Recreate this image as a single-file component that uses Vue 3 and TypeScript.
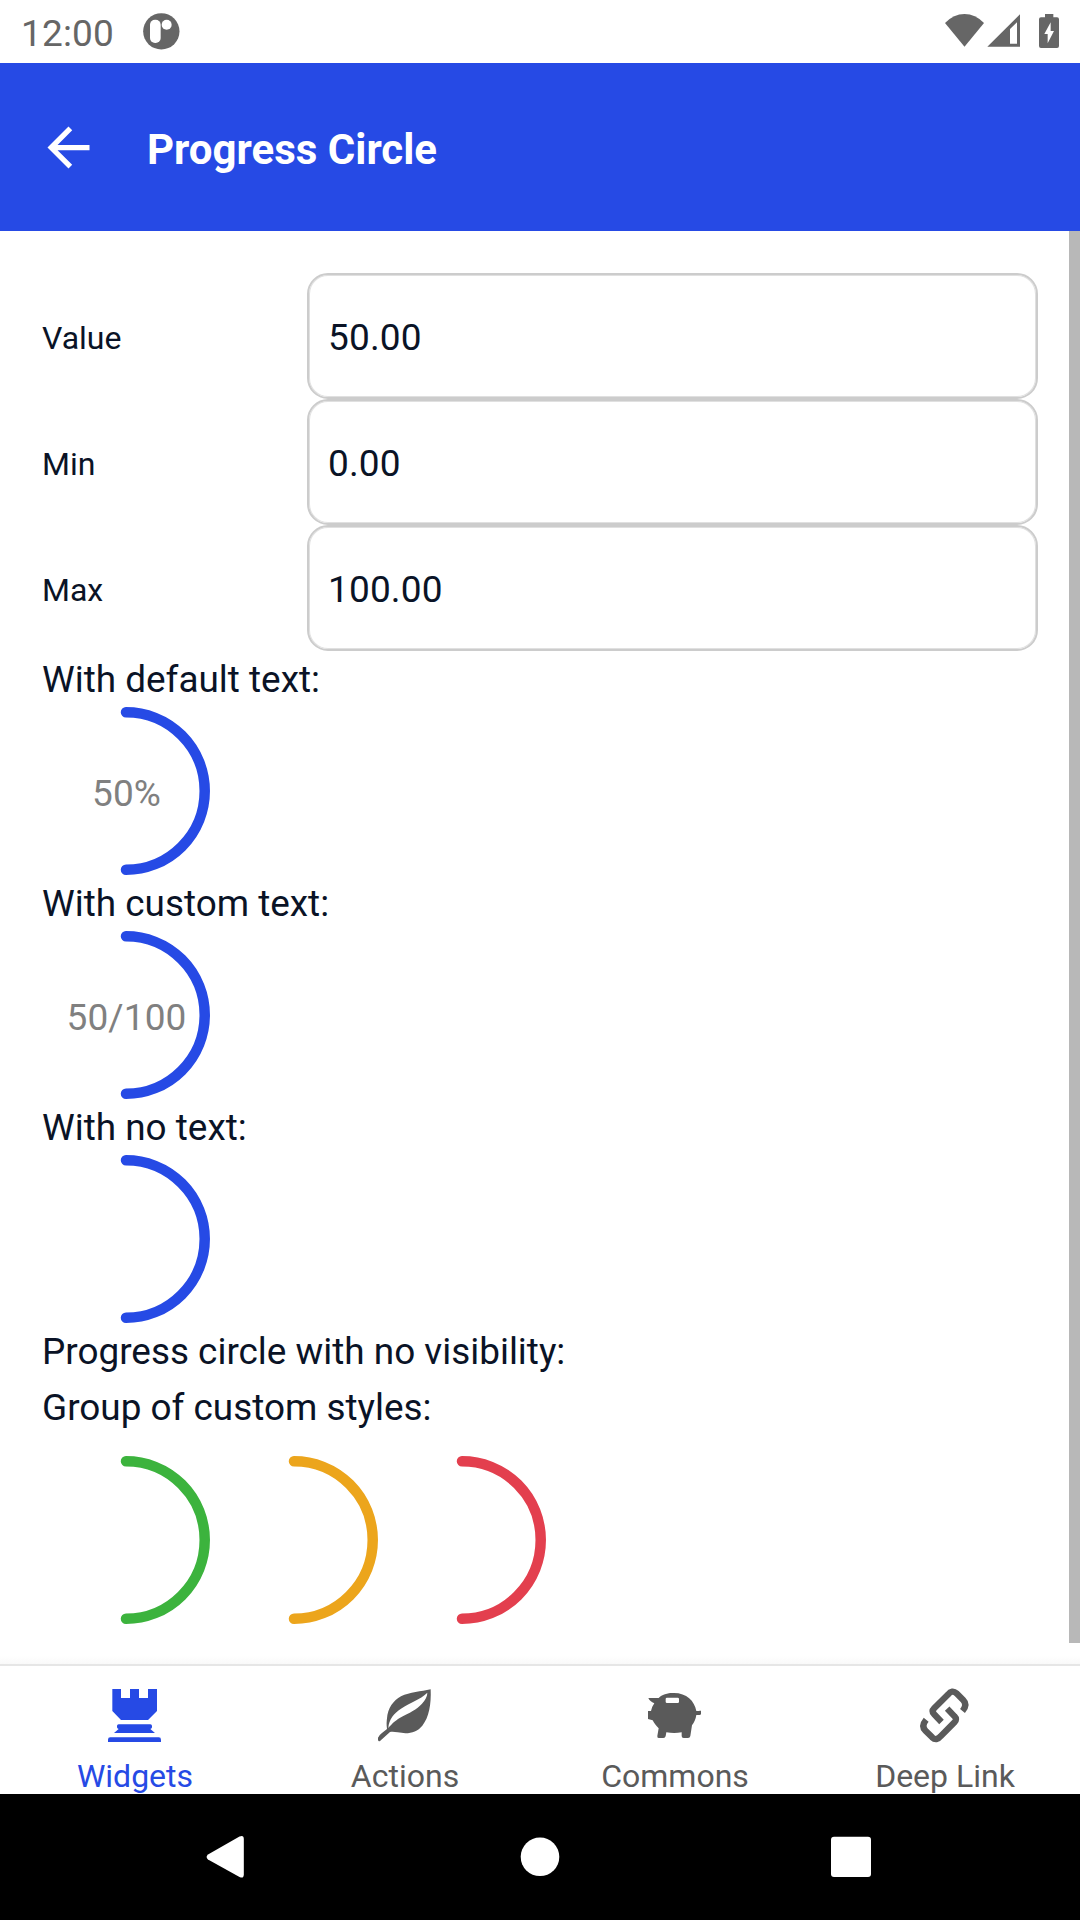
<script setup lang="ts">
import { computed, ref } from 'vue'

interface Field {
  label: string
  value: string
}

const fields = ref<Field[]>([
  { label: 'Value', value: '50.00' },
  { label: 'Min', value: '0.00' },
  { label: 'Max', value: '100.00' },
])

const numbers = computed(() => fields.value.map((f) => Number(f.value) || 0))

const fraction = computed(() => {
  const [value, min, max] = numbers.value
  return max > min ? Math.min(1, Math.max(0, (value - min) / (max - min))) : 0
})

const samples = computed(() => [
  { title: 'With default text:', text: `${Math.round(fraction.value * 100)}%` },
  { title: 'With custom text:', text: `${numbers.value[0]}/${numbers.value[2]}` },
  { title: 'With no text:', text: '' },
])

const brand = '#264ae5'
const styleColors = ['#3cb33d', '#eca51c', '#e33f4e']

const arc = computed(() => {
  const r = 78.75
  const a = Math.min(fraction.value, 0.9999) * 2 * Math.PI
  const x = 84 + r * Math.sin(a)
  const y = 84 - r * Math.cos(a)
  return `M84 5.25A${r} ${r} 0 ${fraction.value > 0.5 ? 1 : 0} 1 ${x} ${y}`
})

const tabs = ['Widgets', 'Actions', 'Commons', 'Deep Link']
const activeTab = ref('Widgets')
</script>

<template>
  <div class="screen">
    <div class="status">
      <span class="clock">12:00</span>
      <svg class="notice" viewBox="0 0 110 110">
        <circle cx="55" cy="55" r="54.5" fill="#666" />
        <rect x="21" y="20" width="32" height="70" rx="15" fill="#fff" />
        <circle cx="71" cy="35" r="15" fill="#fff" />
      </svg>
      <svg class="signals" viewBox="135 0 342 189" fill="#666">
        <path d="M193.500 140L135 69Q161 42 193.500 42T252 69Z" />
        <path fill-rule="evenodd" d="M262 140.500L360 43V140.500ZM330 131H351V67L330 87Z" />
        <path
          fill-rule="evenodd"
          d="M435 42H460V52H471Q477 52 477 58V138Q477 144 471 144H423Q417 144 417 138V58Q417 52 423 52H435ZM452 67L433 102H443V130L462 93H452Z"
        />
      </svg>
    </div>

    <header class="header">
      <svg class="back" viewBox="0 0 24 24" fill="#fff">
        <path d="M20 11H7.830l5.590-5.590L12 4l-8 8 8 8 1.410-1.410L7.830 13H20v-2z" />
      </svg>
      <h1>Progress Circle</h1>
    </header>

    <div class="body">
      <main class="content">
        <label v-for="field in fields" :key="field.label" class="row">
          <span class="label">{{ field.label }}</span>
          <input v-model="field.value" class="input" type="text" />
        </label>

        <template v-for="sample in samples" :key="sample.title">
          <p class="line">{{ sample.title }}</p>
          <div class="circle">
            <svg viewBox="0 0 168 168">
              <path :d="arc" fill="none" :stroke="brand" stroke-width="10.5" stroke-linecap="round" />
            </svg>
            <span class="caption">{{ sample.text }}</span>
          </div>
        </template>

        <p class="line">Progress circle with no visibility:</p>
        <p class="line">Group of custom styles:</p>
        <div class="group">
          <div v-for="color in styleColors" :key="color" class="circle">
            <svg viewBox="0 0 168 168">
              <path :d="arc" fill="none" :stroke="color" stroke-width="10.5" stroke-linecap="round" />
            </svg>
          </div>
        </div>
      </main>
      <div class="scrollbar"></div>
    </div>

    <nav class="tabs">
      <button
        v-for="tab in tabs"
        :key="tab"
        class="tab"
        :class="{ active: tab === activeTab }"
        @click="activeTab = tab"
      >
        <svg v-if="tab === 'Widgets'" viewBox="144 87 159 159" fill="currentColor">
          <path d="M157 87H183V114H210V87H237V114H264V87H291V153L264 180H183L157 153Z" />
          <path d="M176 193H271Q276 193 276 198V202Q276 206 271 207L285 219H162L176 207Q171 206 171 202V198Q171 193 176 193Z" />
          <path d="M151 232H296Q303 232 303 239V246H144V239Q144 232 151 232Z" />
        </svg>
        <svg v-else-if="tab === 'Actions'" viewBox="144 87 159 159" fill="currentColor">
          <path
            fill-rule="evenodd"
            d="M302 88C304 133 297 173 277 197C259 219 233 223 203 217C194 215 186 214 180 216L150 243Q145 246 144 239V233Q146 227 155 220L171 207C169 193 170 184 171 175C173 146 190 121 213 109C240 96 273 95 302 88ZM292 98C269 120 242 126 213 146C192 160 177 177 175 204C187 190 195 183 209 174C240 157 260 149 276 131C286 119 292 110 292 98Z"
          />
        </svg>
        <svg v-else-if="tab === 'Commons'" viewBox="174 87 159 159" fill="currentColor">
          <path
            fill-rule="evenodd"
            d="M175 114H206C214 106 228 99 247 99C288 97 313 121 319 153H328V152H333V161Q333 165 328 165H319C317 177 313 187 306 196L301 228Q300 234 294 234H281Q275 234 275 228V217Q253 221 229 217L227 228Q226 234 220 234H206Q201 234 202 228L206 205C198 197 192 189 188 181L174 177V153H183Q185 141 193 130C184 126 178 121 175 114ZM231 113Q227 113 227 117V125Q227 129 231 129H263Q267 129 267 125V117Q267 113 263 113Z"
          />
        </svg>
        <svg
          v-else
          viewBox="174.500 87 159 159"
          fill="none"
          stroke="currentColor"
          stroke-width="19"
        >
          <path d="M245 186L223 163Q214 154 223 145L264 104Q277 88 290 100L310 120Q324 134 308 153" />
          <path d="M262 146L284 169Q293 178 284 187L243 228Q230 244 217 232L197 212Q183 198 199 179" />
        </svg>
        <span>{{ tab }}</span>
      </button>
    </nav>

    <div class="system">
      <svg viewBox="0 0 1080 126" fill="#fff">
        <path d="M208 60.500L239.500 42.500Q243.800 40.500 243.800 45V80.500Q243.800 85 239.500 83L208 65.500Q205.200 63 208 60.500Z" />
        <circle cx="540" cy="62.800" r="19.300" />
        <rect x="831" y="42.700" width="40" height="40.300" rx="3" />
      </svg>
    </div>
  </div>
</template>

<style>
body {
  margin: 0;
}
</style>

<style scoped>
.screen {
  display: flex;
  flex-direction: column;
  width: 1080px;
  height: 1920px;
  overflow: hidden;
  background: #fff;
  color: #0a1326;
  font-family: Roboto, 'Liberation Sans', sans-serif;
  font-size: 37px;
}
.status {
  display: flex;
  flex: none;
  height: 63px;
  color: #666;
}
.clock {
  margin-left: 21px;
  width: 122px;
  letter-spacing: 0.15px;
  line-height: 67px;
}
.notice {
  width: 36.67px;
  height: 36.67px;
  margin-top: 13.3px;
}
.signals {
  width: 114px;
  height: 63px;
  margin-left: auto;
  margin-right: 21px;
}
.header {
  display: flex;
  flex: none;
  align-items: center;
  height: 168px;
  background: #264ae5;
}
.back {
  width: 63px;
  height: 63px;
  margin-left: 37px;
}
h1 {
  margin: 5px 0 0 47px;
  color: #fff;
  font-size: 42px;
  font-weight: 700;
  line-height: 56px;
}
.body {
  display: flex;
  flex: none;
  height: 1433px;
  background: linear-gradient(to bottom, transparent 1425px, #f9f9f9 1433px);
}
.content {
  flex: 1;
  padding: 42px 31px 0 42px;
}
.scrollbar {
  flex: none;
  width: 11px;
  height: 1412px;
  background: #b8b8b8;
}
.row {
  display: flex;
  align-items: center;
  height: 126px;
}
.label {
  width: 265px;
  padding-top: 4px;
  font-size: 32px;
}
.input {
  box-sizing: border-box;
  flex: 1;
  min-width: 0;
  height: 126px;
  padding: 2px 19px 0;
  border: 2px solid #ccc;
  border-radius: 21px;
  outline: none;
  background: #fff;
  box-shadow: inset 0 0 0 1px rgba(204, 204, 204, 0.6);
  color: inherit;
  font: inherit;
  letter-spacing: 0.15px;
}
.line {
  margin: 0;
  height: 56px;
  font-size: 36.9px;
  line-height: 58px;
}
.circle {
  display: grid;
  width: 168px;
  height: 168px;
  place-items: center;
}
.circle > * {
  grid-area: 1 / 1;
}
.circle svg {
  width: 168px;
  height: 168px;
}
.caption {
  padding: 4px 0 0 1px;
  color: #808080;
  letter-spacing: 0.1px;
}
.group {
  display: flex;
  margin-top: 21px;
}
.tabs {
  box-sizing: border-box;
  display: flex;
  flex: none;
  height: 130px;
  border-top: 2px solid #e6e6e6;
  background: #fff;
}
.tab {
  display: flex;
  flex: 1;
  flex-direction: column;
  align-items: center;
  padding: 23px 0 0;
  border: 0;
  background: none;
  color: #5a5a5a;
  font: inherit;
  font-size: 32px;
}
.tab.active {
  color: #264ae5;
}
.tab svg {
  flex: none;
  width: 53px;
  height: 53px;
  margin-right: 1px;
  overflow: visible;
}
.tab span {
  margin-top: 15px;
  line-height: 38px;
}
.system {
  flex: none;
  height: 126px;
  background: #000;
}
.system svg {
  display: block;
  width: 1080px;
  height: 126px;
}
</style>
